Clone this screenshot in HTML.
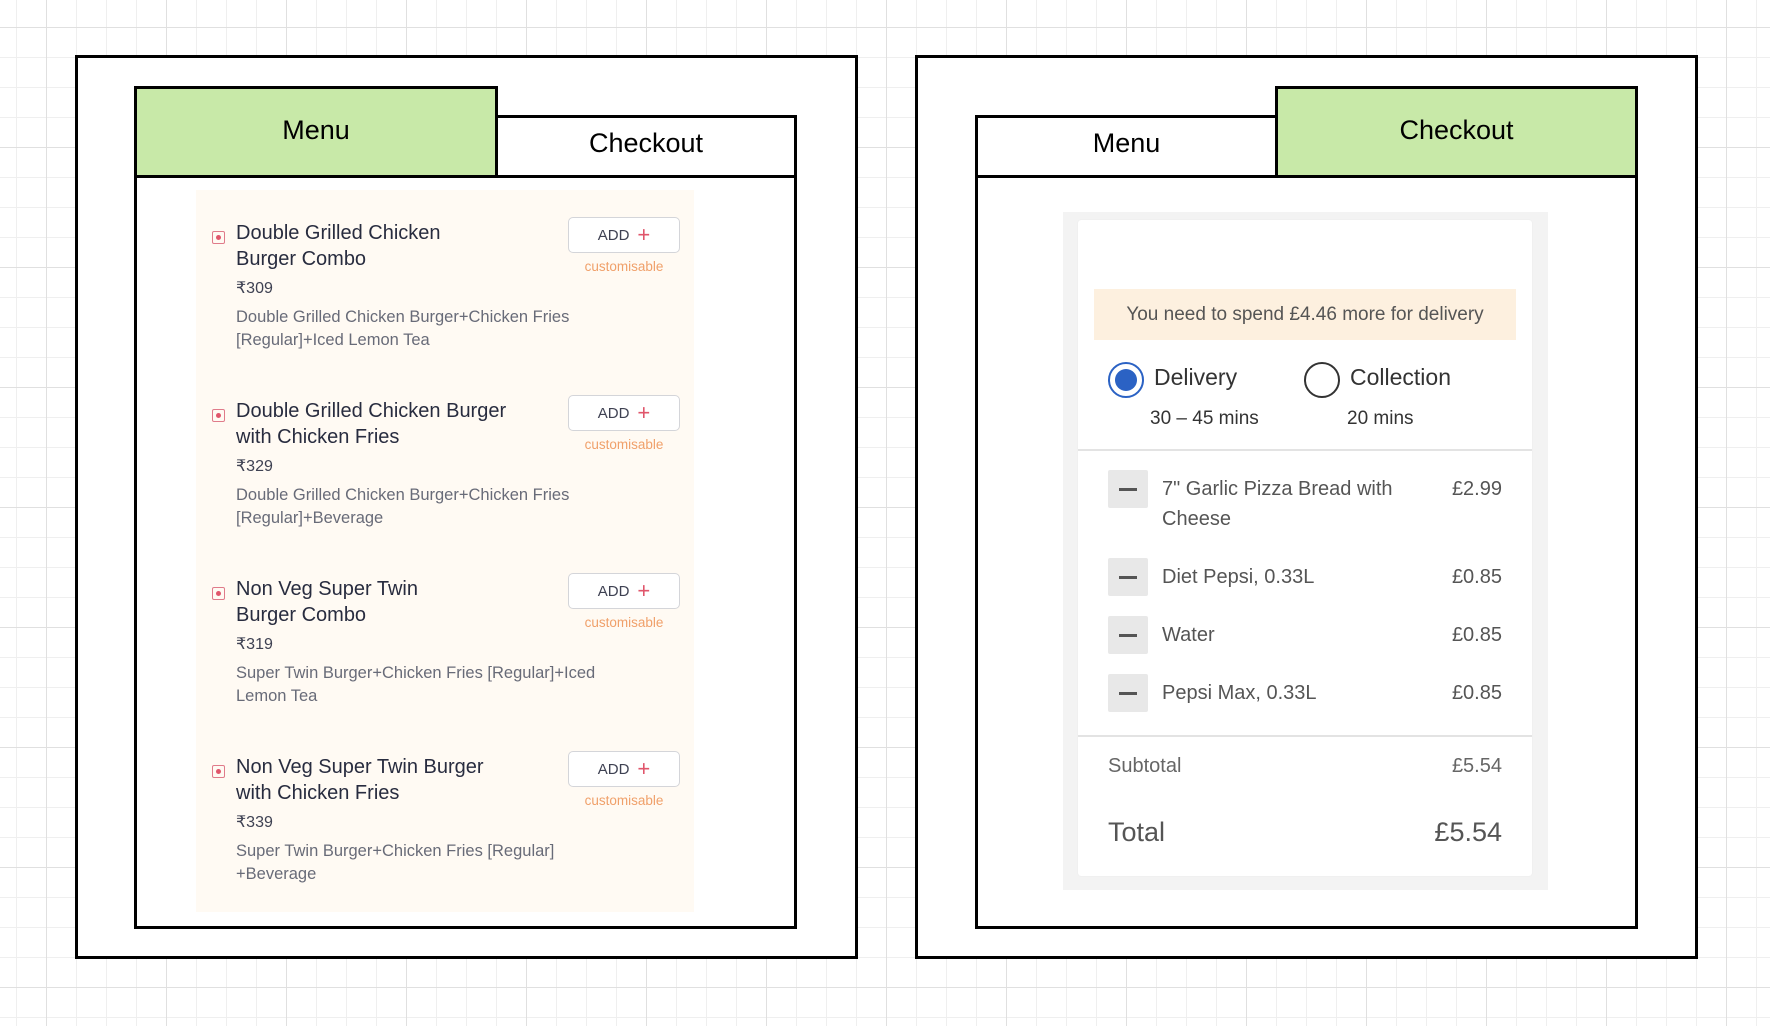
<!DOCTYPE html>
<html><head><meta charset="utf-8"><style>
*{margin:0;padding:0;box-sizing:border-box}
body{width:1770px;height:1026px;overflow:hidden;position:relative;font-family:"Liberation Sans",sans-serif;
background-color:#fff;background-image:linear-gradient(#e0e0e0 1px,transparent 1px),linear-gradient(90deg,#e0e0e0 1px,transparent 1px),linear-gradient(#efefef 1px,transparent 1px),linear-gradient(90deg,#efefef 1px,transparent 1px);background-size:120px 120px,120px 120px,30px 30px,30px 30px;background-position:46px 27px,46px 27px,16px 27px,16px 27px}
.a{position:absolute}
.outer{border:3px solid #000;background:#fff}
.tab{border:3px solid #000;display:flex;align-items:center;justify-content:center;font-size:27px;color:#000;background:#fff}
.green{background:#c8e9a8;align-items:flex-start;padding-top:26px}
.box{border:3px solid #000;background:#fff}
.it{position:absolute;left:0;width:498px;height:178px}
.ic{position:absolute;left:16px;top:0px;width:13px;height:13px;border:1.5px solid #e07b8a;border-radius:2px}
.ic:after{content:"";position:absolute;left:2.5px;top:2.5px;width:5px;height:5px;border-radius:50%;background:#e0566b}
.ti{position:absolute;left:40px;top:-11px;width:290px;font-size:20px;line-height:26px;color:#282c3f}
.pr{position:absolute;left:40px;top:47px;font-size:16px;color:#3e4152}
.ds{position:absolute;left:40px;top:75px;width:380px;font-size:16.5px;line-height:23px;color:#686b78}
.ad{position:absolute;left:372px;top:-14px;width:112px;height:36px;border:1px solid #d4d5d9;border-radius:5px;background:#fff;font-size:15px;color:#3e4152;display:flex;align-items:center;justify-content:center}
.ad b{color:#e0566b;font-weight:400;font-size:22px;margin-left:8px}
.cu{position:absolute;left:372px;top:28px;width:112px;text-align:center;font-size:13.5px;color:#f0a06a}
.row{position:absolute;left:30px;right:30px;font-size:20px;color:#555}
.mn{position:absolute;left:0;top:-8px;width:40px;height:38px;background:#e8e8e8;border-radius:2px}
.mn:after{content:"";position:absolute;left:11px;top:18px;width:18px;height:3px;background:#555}
.rt{position:absolute;right:0;top:0}
</style></head><body>
<div class="a outer" style="left:75px;top:55px;width:783px;height:904px"></div>
<div class="a tab" style="left:495px;top:115px;width:302px;height:63px;padding-bottom:6px">Checkout</div>
<div class="a box" style="left:134px;top:175px;width:663px;height:754px"></div>
<div class="a tab green" style="left:134px;top:86px;width:364px;height:92px">Menu</div>
<div class="a" style="left:196px;top:190px;width:498px;height:722px;background:#fffaf3">
  <div class="it" style="top:41px"><div class="ic"></div><div class="ti" style="width:250px">Double Grilled Chicken Burger Combo</div><div class="pr">₹309</div><div class="ds">Double Grilled Chicken Burger+Chicken Fries [Regular]+Iced Lemon Tea</div><div class="ad">ADD<b>+</b></div><div class="cu">customisable</div></div>
  <div class="it" style="top:219px"><div class="ic"></div><div class="ti" style="width:300px">Double Grilled Chicken Burger with Chicken Fries</div><div class="pr">₹329</div><div class="ds">Double Grilled Chicken Burger+Chicken Fries [Regular]+Beverage</div><div class="ad">ADD<b>+</b></div><div class="cu">customisable</div></div>
  <div class="it" style="top:397px"><div class="ic"></div><div class="ti" style="width:200px">Non Veg Super Twin Burger Combo</div><div class="pr">₹319</div><div class="ds">Super Twin Burger+Chicken Fries [Regular]+Iced Lemon Tea</div><div class="ad">ADD<b>+</b></div><div class="cu">customisable</div></div>
  <div class="it" style="top:575px"><div class="ic"></div><div class="ti" style="width:270px">Non Veg Super Twin Burger with Chicken Fries</div><div class="pr">₹339</div><div class="ds" style="width:370px">Super Twin Burger+Chicken Fries [Regular] +Beverage</div><div class="ad">ADD<b>+</b></div><div class="cu">customisable</div></div>
</div>
<div class="a outer" style="left:915px;top:55px;width:783px;height:904px"></div>
<div class="a tab" style="left:975px;top:115px;width:303px;height:63px;padding-bottom:6px">Menu</div>
<div class="a box" style="left:975px;top:175px;width:663px;height:754px"></div>
<div class="a tab green" style="left:1275px;top:86px;width:363px;height:92px">Checkout</div>
<div class="a" style="left:1063px;top:212px;width:485px;height:678px;background:#f3f3f3"></div>
<div class="a" style="left:1078px;top:220px;width:454px;height:656px;background:#fff;border-radius:3px;box-shadow:0 0 1px #ddd">
  <div class="a" style="left:16px;top:69px;width:422px;height:51px;background:#fdf0df;color:#555;font-size:19px;display:flex;align-items:center;justify-content:center">You need to spend £4.46 more for delivery</div>
  <div class="a" style="left:30px;top:142px;width:36px;height:36px;border:2px solid #2b62c4;border-radius:50%"><div style="position:absolute;left:5px;top:5px;width:22px;height:22px;border-radius:50%;background:#2b62c4"></div></div>
  <div class="a" style="left:76px;top:144px;font-size:23px;color:#333">Delivery</div>
  <div class="a" style="left:72px;top:188px;font-size:19px;color:#333">30 – 45 mins</div>
  <div class="a" style="left:226px;top:142px;width:36px;height:36px;border:2px solid #333;border-radius:50%"></div>
  <div class="a" style="left:272px;top:144px;font-size:23px;color:#333">Collection</div>
  <div class="a" style="left:269px;top:188px;font-size:19px;color:#333">20 mins</div>
  <div class="a" style="left:0;top:229px;width:454px;height:2px;background:#e3e3e3"></div>
  <div class="row" style="top:258px"><div class="mn"></div><div style="position:absolute;left:54px;width:240px;line-height:30px;top:-4px">7" Garlic Pizza Bread with Cheese</div><div class="rt">£2.99</div></div>
  <div class="row" style="top:346px"><div class="mn"></div><div style="position:absolute;left:54px">Diet Pepsi, 0.33L</div><div class="rt">£0.85</div></div>
  <div class="row" style="top:404px"><div class="mn"></div><div style="position:absolute;left:54px">Water</div><div class="rt">£0.85</div></div>
  <div class="row" style="top:462px"><div class="mn"></div><div style="position:absolute;left:54px">Pepsi Max, 0.33L</div><div class="rt">£0.85</div></div>
  <div class="a" style="left:0;top:515px;width:454px;height:2px;background:#e3e3e3"></div>
  <div class="row" style="top:535px;color:#666"><div>Subtotal</div><div class="rt">£5.54</div></div>
  <div class="row" style="top:597px;font-size:27px;color:#555"><div>Total</div><div class="rt">£5.54</div></div>
</div>
</body></html>
